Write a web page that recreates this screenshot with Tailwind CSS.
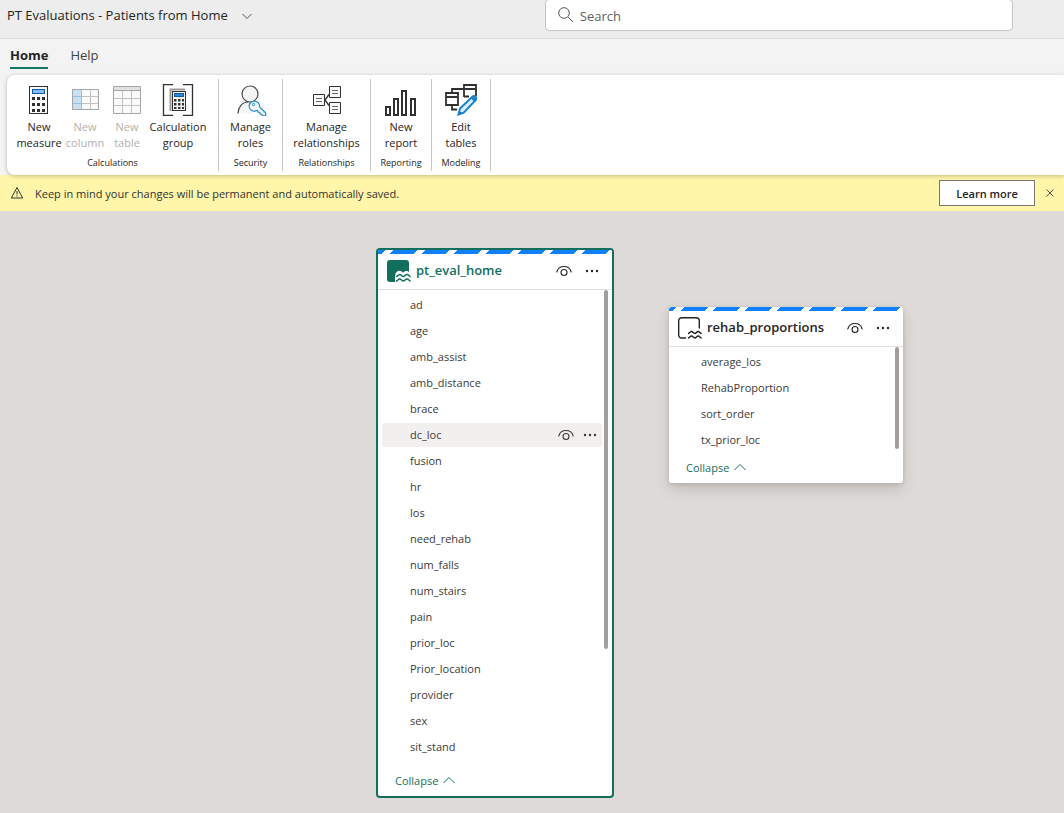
<!DOCTYPE html>
<html lang="en">
<head>
<meta charset="utf-8">
<title>PT Evaluations - Patients from Home</title>
<script src="https://cdn.jsdelivr.net/npm/@tailwindcss/browser@4"></script>
</head>
<body class="flex min-h-screen flex-col bg-[#f3f3f3] font-['Open_Sans','Noto_Sans',sans-serif] text-[11px] text-[#252423]">

<svg class="hidden">
  <symbol id="eye" viewBox="0 0 16 16"><path d="M.8 9C1.800 5.300 4.500 3.500 8 3.500s6.200 1.800 7.200 5.500" fill="none" stroke="currentColor" stroke-width="1.100" stroke-linecap="round"/><circle cx="8" cy="9.500" r="3" fill="none" stroke="currentColor" stroke-width="1.100"/></symbol>
  <symbol id="dots" viewBox="0 0 14 14"><circle cx="2" cy="7" r="1.200" fill="currentColor"/><circle cx="7" cy="7" r="1.200" fill="currentColor"/><circle cx="12" cy="7" r="1.200" fill="currentColor"/></symbol>
  <symbol id="up" viewBox="0 0 12 12"><path d="M.5 9 6 3.500 11.500 9" fill="none" stroke="currentColor"/></symbol>
</svg>

<header class="flex h-[39px] items-start border-b border-[#dedede] bg-[#ededed]">
  <div class="flex-1 pl-[7px]">
    <button class="flex h-8 items-center gap-[14px] text-[13px]">PT Evaluations - Patients from Home
      <svg class="size-[10px]" viewBox="0 0 10 10" fill="none" stroke="#555"><path d="M.5 3 5 7.500 9.500 3"/></svg>
    </button>
  </div>
  <label class="-mt-px mr-[51px] flex h-8 w-[44%] items-center gap-[6px] rounded-sm border border-[#c4c4c4] bg-white pl-3">
    <svg class="size-4" viewBox="0 0 16 16" fill="none" stroke="#555"><circle cx="6" cy="6" r="5.300"/><path d="m10 10 5 5"/></svg>
    <input type="search" aria-label="Search" placeholder="Search" class="min-w-0 flex-1 pt-[3px] text-[13px] outline-none placeholder:text-[#616161]">
  </label>
</header>

<nav class="flex h-9 items-start gap-[22px] px-[10px] pt-[7px] text-[13px]">
  <a href="#" class="border-b-2 border-[#117865] pb-[3px] leading-[18px] font-bold">Home</a>
  <a href="#" class="leading-[18px] text-[#424242]">Help</a>
</nav>

<div class="relative z-10 ml-[7px] flex h-[100px] rounded-l-lg bg-white py-1 text-center shadow-[0_1px_4px_rgba(0,0,0,0.25)]">
  <section class="flex w-[212px] flex-col border-r border-[#c8c6c4] pl-2">
    <div class="flex leading-4">
      <button class="flex w-12 flex-col items-center pt-[5px]">
        <svg class="mb-[3px] size-8" viewBox="0 0 32 32"><rect x="6.500" y="2.500" width="18" height="27" fill="#fafafa" stroke="#323130"/><rect x="9.500" y="5.500" width="12" height="4" fill="#83beec" stroke="#0f5ba9"/><path d="M9 13h3v3H9zm5 0h3v3h-3zm5 0h3v3h-3zM9 19h3v3H9zm5 0h3v3h-3zm5 0h3v3h-3zM9 25h3v3H9zm5 0h3v3h-3zm5 0h3v3h-3z" fill="#323130"/></svg>
        <span>New<br>measure</span>
      </button>
      <button disabled class="flex w-11 flex-col items-center pt-[5px] text-[#b3b0ad]">
        <svg class="mb-[3px] size-8" viewBox="0 0 32 32"><path d="M3 5h27v21H3z" fill="#fafafa"/><path d="M3 5h9v21H3z" fill="#c7e0f4"/><path d="M12.500 5v21M21.500 5v21M3 12.500h27M3 19.500h27" fill="none" stroke="#c2c2c2"/><path d="M3 12.500h9M3 19.500h9M12.500 5v21" stroke="#92bfe5"/><path d="M3.500 5.500h26v20h-26z" fill="none" stroke="#a6a6a6"/></svg>
        <span>New<br>column</span>
      </button>
      <button disabled class="flex w-10 flex-col items-center pt-[5px] text-[#b3b0ad]">
        <svg class="mb-[3px] size-8" viewBox="0 0 32 32"><path d="M2.500 2.500h27v27h-27z" fill="#fafafa"/><path d="M2.500 2.500h27v4h-27z" fill="#e1e1e1"/><path d="M11.500 6v23M20.500 6v23M3 14.500h26M3 21.500h26" fill="none" stroke="#c2c2c2"/><path d="M2.500 2.500h27v27h-27zM3 6.500h26" fill="none" stroke="#a6a6a6"/></svg>
        <span>New<br>table</span>
      </button>
      <button class="flex w-[62px] flex-col items-center pt-[5px]">
        <svg class="mb-[3px] size-8" viewBox="0 0 32 32"><path d="M11 .5H1.500v31H11M21 .5h9.500v31H21" fill="none" stroke="#323130" stroke-width="1.300"/><path d="M8.500 27V5.500H23" fill="none" stroke="#999" stroke-width="2"/><rect x="10.500" y="7.500" width="13" height="19" fill="#f5f5f5" stroke="#323130"/><rect x="12.500" y="9.500" width="9" height="3" fill="#2b88d8" stroke="#0f5ba9"/><path d="M12 15h2.500v2.500H12zm4 0h2.500v2.500H16zm4 0h2v2.500h-2zm-8 4h2.500v2.500H12zm4 0h2.500v2.500H16zm4 0h2v2.500h-2zm-8 4h2.500v2H12zm4 0h2.500v2H16zm4 0h2v2h-2z" fill="#323130"/></svg>
        <span>Calculation<br>group</span>
      </button>
    </div>
    <h2 class="pt-1 pr-2 text-[9px] leading-4">Calculations</h2>
  </section>

  <section class="flex w-16 flex-col border-r border-[#c8c6c4]">
    <button class="flex flex-col items-center pt-[5px] leading-4">
      <svg class="mb-[3px] size-8" viewBox="0 0 32 32" fill="none"><path d="M3 29.500C3 23 7 18 13.500 18c3 0 6 1.500 8 4l-3 7.500z" fill="#f5f5f5"/><circle cx="15" cy="10" r="8" fill="#f5f5f5" stroke="#494847" stroke-width="1.200"/><path d="M3 29.500C3.200 23 7 18.200 13.500 18" stroke="#494847" stroke-width="1.200"/><path d="M20 17.200a5 5 0 1 0 1.200 9.500l1.300-.2.500 1.500 1.800.3.400 1.700 1.700.4.700 1.500h3v-3.200L24.500 23A5 5 0 0 0 20 17.200z" fill="#f4faff" stroke="#1e8bcd" stroke-width="1.200"/><circle cx="18.500" cy="20.500" r="1.200" stroke="#1e8bcd"/></svg>
      <span>Manage<br>roles</span>
    </button>
    <h2 class="pt-1 text-[9px] leading-4">Security</h2>
  </section>

  <section class="flex w-[88px] flex-col border-r border-[#c8c6c4]">
    <button class="flex flex-col items-center pt-[5px] leading-4">
      <svg class="mb-[3px] size-8" viewBox="0 0 32 32" fill="none" stroke="#323130"><path d="m14 16 4-5.500M14 16l4 5.500" stroke-width="1.300"/><path d="M2.500 10.500h11v11h-11zM18.500 2.500h11v11h-11zM18.500 18.500h11v11h-11z" fill="#f8f8f8"/><path d="M5 14.500h6M5 17.500h6M21 6.500h6M21 9.500h6M21 22.500h6M21 25.500h6" stroke="#666"/></svg>
      <span>Manage<br>relationships</span>
    </button>
    <h2 class="pt-1 text-[9px] leading-4">Relationships</h2>
  </section>

  <section class="flex w-[61px] flex-col border-r border-[#c8c6c4]">
    <button class="flex flex-col items-center pt-[5px] leading-4">
      <svg class="mb-[3px] size-8" viewBox="0 0 32 32" fill="#fff" stroke="#323130" stroke-width="2"><path d="M1 23h4v8H1zM9 15h4v16H9zM17 7h4v24h-4zM26 15h4v16h-4z"/></svg>
      <span>New<br>report</span>
    </button>
    <h2 class="pt-1 text-[9px] leading-4">Reporting</h2>
  </section>

  <section class="flex w-[59px] flex-col border-r border-[#c8c6c4]">
    <button class="flex flex-col items-center pt-[5px] leading-4">
      <svg class="mb-[3px] size-8" viewBox="0 0 32 32" fill="none" stroke="#323130" stroke-width="1.800"><path d="M1 9h12v12H1zM1 13h12M7 8V5h12M19 13V1h12v11M19 5h12M19 12.500h5M7 21v4.500h5"/><path d="m13.500 30.500 1.500-6L27.500 12.500c2-1.200 4.500 1 3.500 3.300L19 28.500z" fill="#d9eefc" stroke="#1a80c9" stroke-width="2"/><path d="m26 14.500 3.500 3.500 2-2.500-3-3.300zM13 31l1.500-4 3.500 3z" fill="#1a80c9" stroke="none"/></svg>
      <span>Edit<br>tables</span>
    </button>
    <h2 class="pt-1 text-[9px] leading-4">Modeling</h2>
  </section>
</div>

<div role="status" class="flex h-9 items-center bg-[#fff6aa] pr-[9px] pl-[10px]">
  <svg class="mr-[11px] size-[14px]" viewBox="0 0 14 14" fill="none" stroke="#323130"><path d="M7 1.500 12.700 12H1.300z" stroke-linejoin="round"/><path d="M7 5v3.500M7 9.500v1.200"/></svg>
  <p class="flex-1 pt-[2px] text-[#323130]">Keep in mind your changes will be permanent and automatically saved.</p>
  <button class="h-[26px] w-24 border border-[#797775] bg-white pt-[2px] font-semibold">Learn more</button>
  <button aria-label="Dismiss" class="ml-[10px] flex size-[10px]"><svg class="size-[10px]" viewBox="0 0 10 10" stroke="#555"><path d="m1.500 1.500 7 7M8.500 1.500l-7 7"/></svg></button>
</div>

<main class="relative min-h-[602px] flex-1 overflow-hidden bg-[#dedad7]">
  <article class="absolute top-[37px] left-[376px] w-[238px] overflow-hidden rounded border-2 border-[#136f5c] bg-white">
    <div class="h-1 bg-[repeating-linear-gradient(135deg,#1180ff_0px,#1180ff_5.3px,#fff_5.3px,#fff_11.3px,#1180ff_11.3px,#1180ff_22.6px)]"></div>
    <header class="flex h-9 items-center border-b border-[#e1dfdd] pr-[13px] pb-[2px] pl-[9px]">
      <svg class="mr-[5px] size-6 text-[#136f5c]" viewBox="0 0 24 24"><path d="M3 1h16q3 0 3 3v9l-2 1H13q-3 0-4 3v6H3q-3 0-3-3V4q0-3 3-3z" fill="currentColor"/><path d="M8 16h16v8H8z" fill="#fff"/><path d="M8.500 16.500c1.800 0 2-2.800 4-2.800s2 2.300 3.500 2.300 2-2.300 3.500-2.300 2 2.800 4 2.800" fill="none" stroke="#fff" stroke-width="4"/><path d="M9 17.500c1.800 0 2-2 3.700-2s2 2 3.600 2 2-2 3.700-2 2 2 3.700 2M9 22c1.800 0 2-2 3.700-2s2 2 3.600 2 2-2 3.700-2 2 2 3.700 2" fill="none" stroke="currentColor" stroke-width="1.400"/></svg>
      <h3 class="flex-1 text-[13px] font-semibold text-[#136f5c]">pt_eval_home</h3>
      <button aria-label="Hide table"><svg class="mr-[13px] size-4"><use href="#eye"/></svg></button>
      <button aria-label="More options"><svg class="size-[14px]"><use href="#dots"/></svg></button>
    </header>
    <div class="relative">
      <ul class="flex flex-col gap-[2px] pt-[3px] pr-[10px] pb-[10px] pl-1 leading-6 text-[#3b3a39] *:pl-7">
        <li>ad</li><li>age</li><li>amb_assist</li><li>amb_distance</li><li>brace</li>
        <li class="flex items-center rounded-[3px] bg-[#f1f0ef] pr-[5px]"><span class="flex-1">dc_loc</span>
          <button aria-label="Hide column"><svg class="mr-[9px] size-4"><use href="#eye"/></svg></button>
          <button aria-label="Column options"><svg class="size-[14px]"><use href="#dots"/></svg></button></li>
        <li>fusion</li><li>hr</li><li>los</li><li>need_rehab</li><li>num_falls</li><li>num_stairs</li><li>pain</li><li>prior_loc</li><li>Prior_location</li><li>provider</li><li>sex</li><li>sit_stand</li>
      </ul>
      <div class="absolute top-0 right-1 h-[359px] w-1 rounded-sm bg-[#a19f9d]"></div>
    </div>
    <button class="flex h-[27px] items-start gap-[5px] pl-[17px] leading-6 text-[#136f5c]">Collapse <svg class="mt-[5px] size-3"><use href="#up"/></svg></button>
  </article>

  <article class="absolute top-24 left-[669px] w-[234px] overflow-hidden rounded-[3px] bg-white shadow-[0_6px_14px_rgba(0,0,0,0.14),0_1px_4px_rgba(0,0,0,0.11)]">
    <div class="h-1 bg-[repeating-linear-gradient(135deg,#1180ff_0px,#1180ff_5.3px,#fff_5.3px,#fff_11.3px,#1180ff_11.3px,#1180ff_22.6px)]"></div>
    <header class="flex h-9 items-center border-b border-[#e1dfdd] pr-[13px] pb-[2px] pl-[9px]">
      <svg class="mr-[5px] size-6" viewBox="0 0 24 24" fill="none" stroke="#252423" stroke-width="1.400"><path d="M8 22H4q-3.300 0-3.300-3V4.700Q.7 1.700 4 1.700h14q3.300 0 3.300 3V12.500"/><path d="M10 17.500c1.500 0 2-2 3.500-2s2 2 3.300 2 2-2 3.400-2 2 2 3.500 2M10 22c1.500 0 2-2 3.500-2s2 2 3.300 2 2-2 3.400-2 2 2 3.500 2"/></svg>
      <h3 class="flex-1 text-[13px] font-semibold">rehab_proportions</h3>
      <button aria-label="Hide table"><svg class="mr-[13px] size-4"><use href="#eye"/></svg></button>
      <button aria-label="More options"><svg class="size-[14px]"><use href="#dots"/></svg></button>
    </header>
    <div class="relative">
      <ul class="flex flex-col gap-[2px] pt-[3px] pr-[10px] pb-1 pl-1 leading-6 text-[#3b3a39] *:pl-7">
        <li>average_los</li><li>RehabProportion</li><li>sort_order</li><li>tx_prior_loc</li>
      </ul>
      <div class="absolute top-0 right-1 h-[102px] w-1 rounded-sm bg-[#a19f9d]"></div>
    </div>
    <button class="flex h-[27px] items-start gap-[5px] pl-[17px] leading-6 text-[#136f5c]">Collapse <svg class="mt-[5px] size-3"><use href="#up"/></svg></button>
  </article>
</main>
</body>
</html>
